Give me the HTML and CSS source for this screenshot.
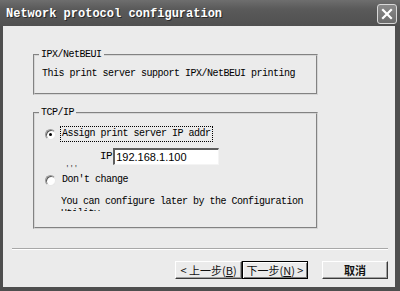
FILE: index.html
```html
<!DOCTYPE html>
<html lang="en">
<head>
  <meta charset="UTF-8" />
  <title>Network protocol configuration</title>
  <link rel="stylesheet" href="styles.css">
</head>
<body>
  <div class="window">
    <div class="titlebar">
      <span class="title">Network protocol configuration</span>
      <span class="close">
        <svg width="14" height="14" viewBox="0 0 14 14"><path d="M3 3 L11 11 M11 3 L3 11" stroke="#fff" stroke-width="2.2" stroke-linecap="square"/></svg>
      </span>
    </div>
    <div class="content">
      <fieldset class="group ipx">
        <legend>IPX/NetBEUI</legend>
        <p class="text">This print server support IPX/NetBEUI printing</p>
      </fieldset>
      <fieldset class="group tcp">
        <legend>TCP/IP</legend>
        <div class="option">
          <span class="radio checked"></span>
          <span class="label focus">Assign print server IP addr</span>
        </div>
        <div class="ip-row">
          <span class="dots">'''</span>
          <span class="ip-label">IP</span>
          <span class="ip-input">192.168.1.100</span>
        </div>
        <div class="option second">
          <span class="radio"></span>
          <span class="label">Don't change</span>
        </div>
        <div class="note">You can configure later by the Configuration Utility</div>
      </fieldset>
      <div class="sep"></div>
      <div class="buttons">
        <button class="btn">&lt; 上一步(<u>B</u>)</button>
        <button class="btn default">下一步(<u>N</u>) &gt;</button>
        <button class="btn cancel">取消</button>
      </div>
    </div>
  </div>
</body>
</html>
```
FILE: styles.css
```css
:root {
  --frame: #4e4e4e;
  --face: #ebebeb;
  --shadow: #a8a8a8;
  --dark: #3a3a3a;
  --mono: "Liberation Mono", "DejaVu Sans Mono", monospace;
  --cjk: "Noto Sans CJK SC", "Liberation Sans", sans-serif;
}
* { box-sizing: border-box; margin: 0; padding: 0; }
body { width: 400px; height: 291px; overflow: hidden; background: var(--frame); }

.window {
  width: 400px; height: 291px;
  background: var(--frame);
  padding: 0 5px 4px 3px;
  display: flex; flex-direction: column;
}
.titlebar {
  height: 26px; margin: 0 -5px 0 -3px;
  padding: 0 3px 0 6px;
  display: flex; align-items: center; justify-content: space-between;
  background: linear-gradient(#6e6e6e, #5a5a5a 35%, #505050);
}
.title {
  font-family: var(--mono); font-weight: bold; font-size: 12px;
  color: #fff; text-shadow: 1px 1px 0 #2a2a2a;
  padding-top: 2px;
}
.close {
  width: 20px; height: 20px; margin-top: 2px;
  border: 1px solid #d8d8d8; border-radius: 3px;
  background: linear-gradient(#8a8a8a, #6c6c6c);
  display: flex; align-items: center; justify-content: center;
}

.content {
  flex: 1;
  background: var(--face);
  padding-top: 23px;
  font-family: var(--mono); font-size: 10px; letter-spacing: -0.5px;
  color: #000;
}
.group {
  margin-left: 30px; width: 285px;
  border: 2px groove #d6d6d6;
  padding: 0 0 0 4px;
}
.group legend { padding: 0 2px; line-height: 12px; }
.ipx { padding-top: 7px; padding-bottom: 13px; }
.ipx .text { line-height: 12px; padding-left: 3px; }

.tcp { margin-top: 12px; padding-top: 7px; padding-bottom: 16px; }
.option { display: flex; align-items: center; height: 16px; margin-left: 6px; }
.option.second { margin-top: 7px; }
.radio {
  width: 11px; height: 11px; border-radius: 50%;
  background: #fff;
  border: 1px solid #9a9a9a;
  border-right-color: #e8e8e8; border-bottom-color: #e8e8e8;
  box-shadow: inset 1px 1px 0 #5a5a5a;
  margin-right: 4px; position: relative;
}
.radio.checked::after {
  content: ""; position: absolute; left: 3px; top: 3px;
  width: 3px; height: 3px; border-radius: 50%; background: #000;
}
.label { padding: 1px 1px; line-height: 12px; border: 1px solid transparent; }
.label.focus { border: 1px dotted #000; }

.ip-row { display: flex; align-items: flex-start; margin-top: 6px; height: 17px; }
.dots { width: 61px; flex-shrink: 0; padding-left: 26px; margin-top: 17px; font-size: 8px; line-height: 6px; color: #444; }
.ip-label { line-height: 17px; font-size: 11px; }
.ip-input {
  width: 106px; height: 17px; margin-left: 1px; flex-shrink: 0;
  background: #fff;
  border-top: 2px solid #5e5e5e; border-left: 2px solid #5e5e5e;
  border-right: 1px solid #f4f4f4; border-bottom: 1px solid #f4f4f4;
  font-family: "Liberation Sans", sans-serif; font-size: 11px; letter-spacing: 0;
  line-height: 14px; padding-left: 1px;
}

.note {
  margin-top: 8px; margin-left: 22px;
  width: 250px; height: 15px; overflow: hidden;
  line-height: 12px;
}

.sep {
  margin: 19px 7px 0 9px;
  border-top: 1px solid var(--shadow);
  border-bottom: 1px solid #fff;
}
.buttons {
  display: flex; justify-content: flex-end;
  margin-top: 11px; padding-right: 7px;
}
.btn {
  width: 66px; height: 18px;
  background: var(--face);
  border: 1px solid #fff;
  border-right-color: var(--dark); border-bottom-color: var(--dark);
  box-shadow: inset -1px -1px 0 #a0a0a0;
  font-family: var(--cjk); font-size: 11px; line-height: 14px; color: #111;
  letter-spacing: 0;
}
.btn:first-child { width: 67px; }
.btn u { text-decoration: underline; }
.btn.default { border: 1px solid #000; box-shadow: inset 1px 1px 0 #fff, inset -1px -1px 0 #7a7a7a; }
.btn.cancel { margin-left: 14px; font-weight: bold; }
```
